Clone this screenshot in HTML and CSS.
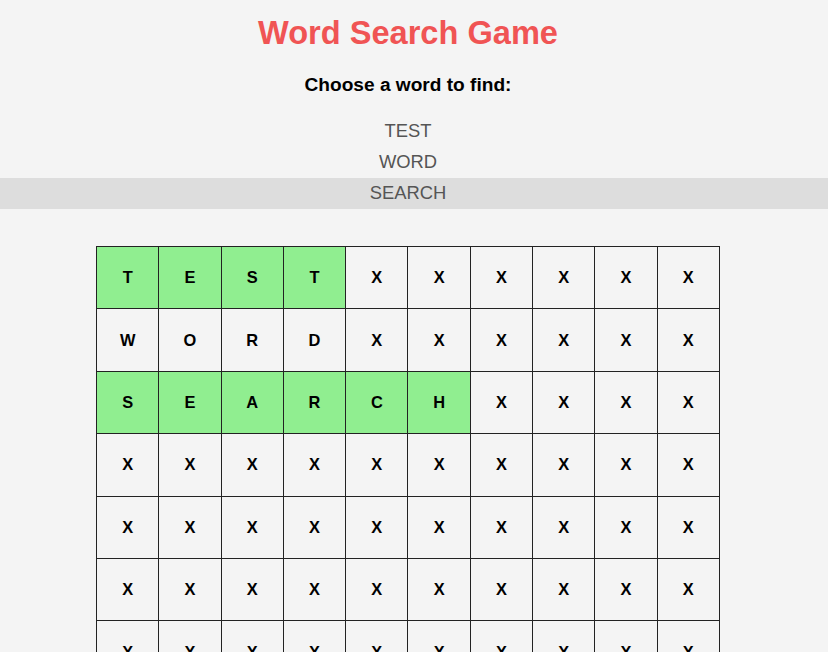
FILE: index.html
```html
<!DOCTYPE html>
<html>
<head>
<meta charset="utf-8">
<link rel="stylesheet" href="styles.css">
</head>
<body>
<div class="page">
  <h1 class="title">Word Search Game</h1>
  <h3 class="prompt">Choose a word to find:</h3>
  <ul class="words">
    <li class="word">TEST</li>
    <li class="word">WORD</li>
    <li class="word selected">SEARCH</li>
  </ul>
  <div class="board">
  <div class="grid">
    <div class="cell found">T</div><div class="cell found">E</div><div class="cell found">S</div><div class="cell found">T</div><div class="cell">X</div><div class="cell">X</div><div class="cell">X</div><div class="cell">X</div><div class="cell">X</div><div class="cell">X</div>
    <div class="cell">W</div><div class="cell">O</div><div class="cell">R</div><div class="cell">D</div><div class="cell">X</div><div class="cell">X</div><div class="cell">X</div><div class="cell">X</div><div class="cell">X</div><div class="cell">X</div>
    <div class="cell found">S</div><div class="cell found">E</div><div class="cell found">A</div><div class="cell found">R</div><div class="cell found">C</div><div class="cell found">H</div><div class="cell">X</div><div class="cell">X</div><div class="cell">X</div><div class="cell">X</div>
    <div class="cell">X</div><div class="cell">X</div><div class="cell">X</div><div class="cell">X</div><div class="cell">X</div><div class="cell">X</div><div class="cell">X</div><div class="cell">X</div><div class="cell">X</div><div class="cell">X</div>
    <div class="cell">X</div><div class="cell">X</div><div class="cell">X</div><div class="cell">X</div><div class="cell">X</div><div class="cell">X</div><div class="cell">X</div><div class="cell">X</div><div class="cell">X</div><div class="cell">X</div>
    <div class="cell">X</div><div class="cell">X</div><div class="cell">X</div><div class="cell">X</div><div class="cell">X</div><div class="cell">X</div><div class="cell">X</div><div class="cell">X</div><div class="cell">X</div><div class="cell">X</div>
    <div class="cell">X</div><div class="cell">X</div><div class="cell">X</div><div class="cell">X</div><div class="cell">X</div><div class="cell">X</div><div class="cell">X</div><div class="cell">X</div><div class="cell">X</div><div class="cell">X</div>
    <div class="cell">X</div><div class="cell">X</div><div class="cell">X</div><div class="cell">X</div><div class="cell">X</div><div class="cell">X</div><div class="cell">X</div><div class="cell">X</div><div class="cell">X</div><div class="cell">X</div>
  </div>
  </div>
</div>
</body>
</html>
```
FILE: styles.css
```css
html, body {
  margin: 0;
  padding: 0;
  background: #f4f4f4;
  overflow: hidden;
}
body {
  font-family: "Liberation Sans", Arial, sans-serif;
  color: #000;
}
.page {
  padding: 14px 0 0 0;
  text-align: center;
}
.title {
  margin: 0 12px 0 0;
  font-size: 32.6px;
  font-weight: bold;
  color: #f05454;
  line-height: 37px;
}
.prompt {
  margin: 23px 12px 20px 0;
  font-size: 19.1px;
  font-weight: bold;
  line-height: 22px;
}
.words {
  list-style: none;
  margin: 0;
  padding: 0;
}
.word {
  font-size: 18.4px;
  color: #555;
  line-height: 29px;
  height: 31px;
  padding-right: 12px;
}
.selected {
  background: #dddddd;
}
.board {
  padding: 37px 12px 0 0;
}
.grid {
  margin: 0 auto;
  width: 624px;
  display: grid;
  grid-template-columns: repeat(10, 1fr);
  grid-auto-rows: 62.4px;
  border-left: 1px solid #222;
  border-top: 1px solid #222;
  box-sizing: border-box;
}
.cell {
  display: flex;
  align-items: center;
  justify-content: center;
  border-right: 1px solid #222;
  border-bottom: 1px solid #222;
  font-size: 16.4px;
  font-weight: bold;
  color: #000;
}
.found {
  background: #90ee90;
}
```
